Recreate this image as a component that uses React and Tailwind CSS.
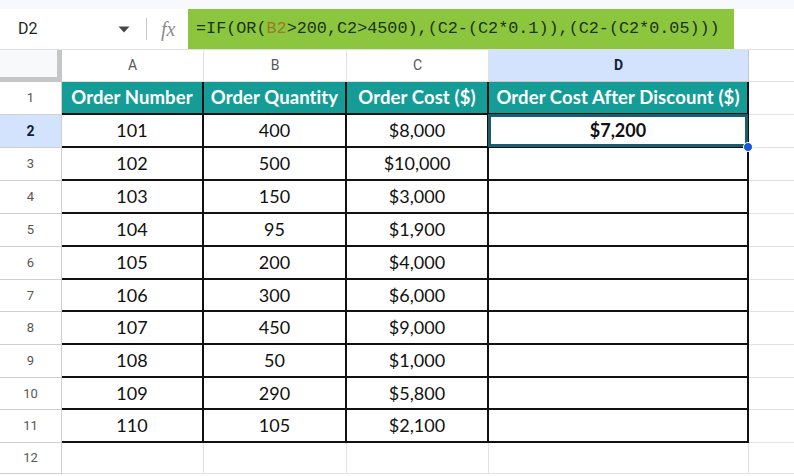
import React from "react";

const rows = [
  ["101", "400", "$8,000"],
  ["102", "500", "$10,000"],
  ["103", "150", "$3,000"],
  ["104", "95", "$1,900"],
  ["105", "200", "$4,000"],
  ["106", "300", "$6,000"],
  ["107", "450", "$9,000"],
  ["108", "50", "$1,000"],
  ["109", "290", "$5,800"],
  ["110", "105", "$2,100"],
];
const heights = [33, 33, 33, 33, 33, 32, 33, 33, 32, 33];

const cal = { fontFamily: "Lato, 'Open Sans', sans-serif" };
const rob = { fontFamily: "Roboto, Arial, sans-serif" };

export default function App() {
  return (
    <div className="w-[794px] h-[476px] overflow-hidden bg-white flex flex-col">
      <div className="h-[9px] bg-[#f7f9fc] shrink-0" />
      {/* formula bar */}
      <div className="h-[40px] flex items-center shrink-0 bg-white">
        <div className="w-[118px] pl-[18px] text-[16px] text-[#1f1f1f]" style={rob}>D2</div>
        <svg width="12" height="7" viewBox="0 0 12 7">
          <path d="M0.5 0.5 L11.5 0.5 L6 6.5 Z" fill="#444746" />
        </svg>
        <div className="w-px h-[22px] bg-[#c4c7c5] ml-[16px]" />
        <div className="ml-[14px] w-[27px] text-[20px] italic text-[#8a8d90] leading-none" style={{ fontFamily: "'Liberation Serif', serif" }}>fx</div>
        <div className="h-full w-[546px] bg-[#8cc63f] flex items-center pl-[8px] text-[16.8px] text-[#1c3214]" style={{ fontFamily: "'Liberation Mono', 'DejaVu Sans Mono', monospace" }}>
          =IF(OR(<span className="text-[#9a7b26]">B2</span>&gt;200,C2&gt;4500),(C2-(C2*0.1)),(C2-(C2*0.05)))
        </div>
      </div>
      {/* column headers */}
      <div className="h-[33px] flex shrink-0 border-t border-[#e1e3e1]" style={rob}>
        <div className="w-[62px] h-full bg-[#f8f9fa] border-r-[5px] border-b-[5px] border-[#c4c7c5] box-border" />
        {[["A", 142], ["B", 143], ["C", 142]].map(([l, w]) => (
          <div key={l} className="h-full flex items-center justify-center text-[14px] text-[#575757] border-r border-b border-[#e1e3e1] box-border" style={{ width: w }}>{l}</div>
        ))}
        <div className="w-[260px] h-full flex items-center justify-center text-[14px] font-bold text-[#0b1f40] bg-[#d3e3fd] border-r border-b border-[#c4c7c5] box-border">D</div>
        <div className="flex-1 h-full border-b border-[#e1e3e1]" />
      </div>
      {/* header row 1 */}
      <div className="h-[33px] flex shrink-0">
        <div className="w-[62px] h-full flex items-center justify-center text-[13px] text-[#575757] border-r border-b border-[#d0d0d0] box-border" style={rob}>1</div>
        {[["Order Number", 142], ["Order Quantity", 143], ["Order Cost ($)", 142], ["Order Cost After Discount ($)", 260]].map(([t, w]) => (
          <div key={t} className="h-full flex items-center justify-center bg-[#169c97] text-white font-bold text-[18.5px] tracking-[0.1px] border-r-2 border-b-2 border-[#111] box-border whitespace-nowrap" style={{ width: w, ...cal }}>{t}</div>
        ))}
        <div className="flex-1 h-full border-b border-[#e1e3e1]" />
      </div>
      {rows.map((r, i) => {
        const sel = i === 0;
        return (
          <div key={i} className="flex shrink-0" style={{ height: heights[i] }}>
            <div className={`w-[62px] h-full flex items-center justify-center border-r border-b border-[#d0d0d0] box-border ${sel ? "bg-[#d3e3fd] font-bold text-[#0b1f40] text-[14px]" : "text-[#575757] text-[13px]"}`} style={rob}>{i + 2}</div>
            {r.map((v, j) => (
              <div key={j} className="h-full flex items-center justify-center text-[18px] text-[#111] border-r-2 border-b-2 border-[#111] box-border" style={{ width: [142, 143, 142][j], ...cal }}>{v}</div>
            ))}
            <div className="w-[260px] h-full border-r-2 border-b-2 border-[#111] box-border relative">
              {sel && (
                <>
                  <div className="absolute inset-[-1px] border-[3px] border-[#1b5d6e] flex items-center justify-center text-[18px] font-bold text-[#111]" style={cal}>$7,200</div>
                  <div className="absolute right-[-6px] bottom-[-6px] w-[10px] h-[10px] rounded-full bg-[#1a56d8] border border-white z-10" />
                </>
              )}
            </div>
            <div className="flex-1 h-full border-b border-[#e1e3e1]" />
          </div>
        );
      })}
      <div className="h-[31px] flex shrink-0">
        <div className="w-[62px] h-full flex items-center justify-center text-[13px] text-[#575757] border-r border-b border-[#d0d0d0] box-border" style={rob}>12</div>
        {[142, 143, 142, 260].map((w, j) => (
          <div key={j} className="h-full border-r border-b border-[#e1e3e1] box-border" style={{ width: w }} />
        ))}
        <div className="flex-1 h-full border-b border-[#e1e3e1]" />
      </div>
    </div>
  );
}
